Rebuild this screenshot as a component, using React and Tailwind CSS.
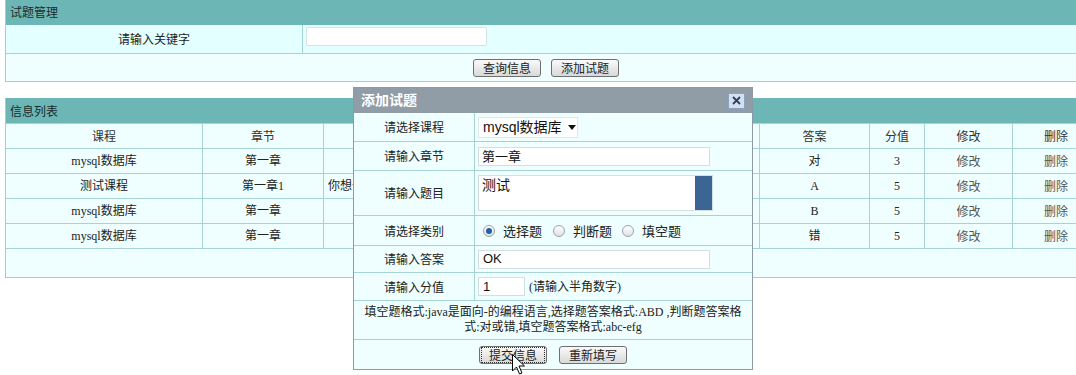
import React from 'react';

const ROWS = [
  { course: 'mysql数据库', chapter: '第一章', title: '', answer: '对', score: '3' },
  { course: '测试课程', chapter: '第一章1', title: '你想干什么', answer: 'A', score: '5' },
  { course: 'mysql数据库', chapter: '第一章', title: '', answer: 'B', score: '5' },
  { course: 'mysql数据库', chapter: '第一章', title: '', answer: '错', score: '5' },
];

// 题目/类型 columns sit under the dialog, so their headers are left blank
const HEADS = ['课程', '章节', '', '', '答案', '分值', '修改', '删除'];

function Btn({ children, focus }) {
  return (
    <button className="h-[18px] px-[2px] border border-[#6f6f6f] rounded-[3px] bg-linear-to-b from-[#fafafa] to-[#d9d9d9] text-[12px] leading-none text-[#222] flex items-center justify-center">
      <span className={`px-[7px] py-[1px] ${focus ? 'outline-1 outline-dotted outline-[#333]' : ''}`}>{children}</span>
    </button>
  );
}

function Radio({ checked }) {
  return (
    <span className="w-[12px] h-[12px] rounded-full border border-[#9aa3ab] bg-linear-to-b from-[#ffffff] to-[#dde2e6] flex items-center justify-center">
      {checked && <span className="w-[6px] h-[6px] rounded-full bg-[#1f5fa8]" />}
    </span>
  );
}

function Cell({ children, className = '' }) {
  return <div className={`bg-[#efffff] flex items-center justify-center ${className}`}>{children}</div>;
}

export default function App() {
  return (
    <div className="w-[1076px] h-[375px] overflow-hidden relative bg-white text-[#222] font-['Liberation_Serif','Noto_Sans_CJK_SC',serif] text-[12px]">
      <div className="w-[1100px] ml-[5px]">
        {/* 试题管理 */}
        <div className="w-[1081px] border-l border-b border-[#9fcfcf]">
          <div className="h-[25px] bg-[#6db6b6] pl-[4px] leading-[24px] text-[#1c2b2b] font-['Noto_Sans_CJK_SC',sans-serif]">试题管理</div>
          <div className="grid grid-cols-[296px_1fr] gap-px bg-[#a6d4d4]">
            <div className="h-[28px] bg-[#e4ffff] flex items-center justify-center font-['Noto_Sans_CJK_SC',sans-serif]">请输入关键字</div>
            <div className="h-[28px] bg-[#e4ffff] pl-[3px] pt-[2px]">
              <div className="w-[181px] h-[19px] bg-white border border-[#d3e4e4] rounded-[2px]" />
            </div>
          </div>
          <div className="h-[28px] border-t border-[#a6d4d4] bg-[#efffff] flex items-center justify-center gap-[10px] font-['Noto_Sans_CJK_SC',sans-serif]">
            <Btn>查询信息</Btn>
            <Btn>添加试题</Btn>
          </div>
        </div>

        {/* 信息列表 */}
        <div className="w-[1095px] mt-[16px] border-l border-b border-[#9fcfcf]">
          <div className="h-[25px] bg-[#6db6b6] pl-[4px] leading-[25px] text-[#1c2b2b] font-['Noto_Sans_CJK_SC',sans-serif]">信息列表</div>
          <div className="grid grid-cols-[196px_120px_330px_104px_109px_54px_87px_86px] gap-px bg-[#a6d4d4] pt-px">
            {HEADS.map((h, i) => (
              <Cell key={i} className="h-[24px] font-['Noto_Sans_CJK_SC',sans-serif] text-[#333]">{h}</Cell>
            ))}
            {ROWS.map((r, i) => (
              <React.Fragment key={i}>
                <Cell className="h-[24px]">{r.course}</Cell>
                <Cell className="h-[24px]">{r.chapter}</Cell>
                <Cell className="h-[24px] justify-start pl-[4px]">{r.title}</Cell>
                <Cell className="h-[24px]" />
                <Cell className="h-[24px]">{r.answer}</Cell>
                <Cell className="h-[24px]">{r.score}</Cell>
                <Cell className="h-[24px] text-[#555] font-['Noto_Sans_CJK_SC',sans-serif]">修改</Cell>
                <Cell className="h-[24px] text-[#555] font-['Noto_Sans_CJK_SC',sans-serif]">删除</Cell>
              </React.Fragment>
            ))}
            <Cell className="h-[28px] col-span-8" />
          </div>
        </div>
      </div>

      {/* 添加试题 dialog */}
      <div className="absolute left-[353px] top-[87px] w-[400px] border border-[#8d99a3] bg-[#a6d4d4] font-['Noto_Sans_CJK_SC',sans-serif]">
        <div className="h-[25px] bg-[#909ca6] flex items-center justify-between pl-[7px] pr-[7px]">
          <span className="text-[14px] font-bold text-white font-['Liberation_Serif','Noto_Sans_CJK_SC',serif]">添加试题</span>
          <span className="w-[17px] h-[16px] border border-[#8aa2c4] bg-[#d3e0f2] flex items-center justify-center">
            <svg width="9" height="9" viewBox="0 0 9 9">
              <path d="M1 1L8 8M8 1L1 8" stroke="#2e3f5e" strokeWidth="1.8" />
            </svg>
          </span>
        </div>
        <div className="grid grid-cols-[120px_1fr] gap-px">
          <Cell className="h-[28px]">请选择课程</Cell>
          <Cell className="h-[28px] justify-start pl-[3px]">
            <div className="w-[100px] h-[21px] bg-white border border-[#e1e6e6] flex items-center pl-[4px] text-[14px] leading-none font-['Liberation_Sans','Noto_Sans_CJK_SC',sans-serif] text-[#111]">
              <span>mysql数据库</span>
              <svg className="ml-[6px] shrink-0" width="8" height="5" viewBox="0 0 8 5"><path d="M0 0H8L4 5Z" fill="#111" /></svg>
            </div>
          </Cell>
          <Cell className="h-[28px]">请输入章节</Cell>
          <Cell className="h-[28px] justify-start pl-[3px]">
            <div className="w-[232px] h-[19px] bg-white border border-[#d3dede] flex items-center pl-[3px] text-[13px] text-[#111]">第一章</div>
          </Cell>
          <Cell className="h-[44px]">请输入题目</Cell>
          <Cell className="h-[44px] justify-start pl-[3px]">
            <div className="w-[235px] h-[36px] bg-white border border-[#d3dede] flex">
              <div className="flex-1 pl-[3px] text-[14px] leading-[17px] text-[#111]">测试</div>
              <div className="w-[17px] bg-[#3b6592]" />
            </div>
          </Cell>
          <Cell className="h-[29px]">请选择类别</Cell>
          <Cell className="h-[29px] justify-start pl-[8px] text-[13px]">
            <Radio checked />
            <span className="ml-[8px]">选择题</span>
            <span className="ml-[11px]"><Radio /></span>
            <span className="ml-[8px]">判断题</span>
            <span className="ml-[10px]"><Radio /></span>
            <span className="ml-[8px]">填空题</span>
          </Cell>
          <Cell className="h-[26px]">请输入答案</Cell>
          <Cell className="h-[26px] justify-start pl-[3px]">
            <div className="w-[232px] h-[19px] bg-white border border-[#d3dede] flex items-center pl-[4px] text-[13px] font-['Liberation_Sans',sans-serif] text-[#111]">OK</div>
          </Cell>
          <Cell className="h-[27px]">请输入分值</Cell>
          <Cell className="h-[27px] justify-start pl-[3px]">
            <div className="w-[47px] h-[19px] bg-white border border-[#d3dede] flex items-center pl-[4px] text-[13px] font-['Liberation_Sans',sans-serif] text-[#111]">1</div>
            <span className="ml-[4px] text-[12px] font-['Liberation_Serif','Noto_Sans_CJK_SC',serif]">(请输入半角数字)</span>
          </Cell>
          <Cell className="h-[38px] col-span-2 text-center leading-[15px] font-['Liberation_Serif','Noto_Sans_CJK_SC',serif]">
            <div>
              填空题格式:java是面向-的编程语言,选择题答案格式:ABD ,判断题答案格
              <br />
              式:对或错,填空题答案格式:abc-efg
            </div>
          </Cell>
          <Cell className="h-[29px] col-span-2 gap-[12px]">
            <Btn focus>提交信息</Btn>
            <Btn>重新填写</Btn>
          </Cell>
        </div>
      </div>

      {/* mouse pointer */}
      <svg className="absolute left-[512px] top-[354px]" width="13" height="21" viewBox="0 0 13 21">
        <path d="M0.5 0.5V17L4.5 13L7.5 20L10 19L7 12H12.5Z" fill="white" stroke="black" strokeWidth="1" strokeLinejoin="round" />
      </svg>
    </div>
  );
}
